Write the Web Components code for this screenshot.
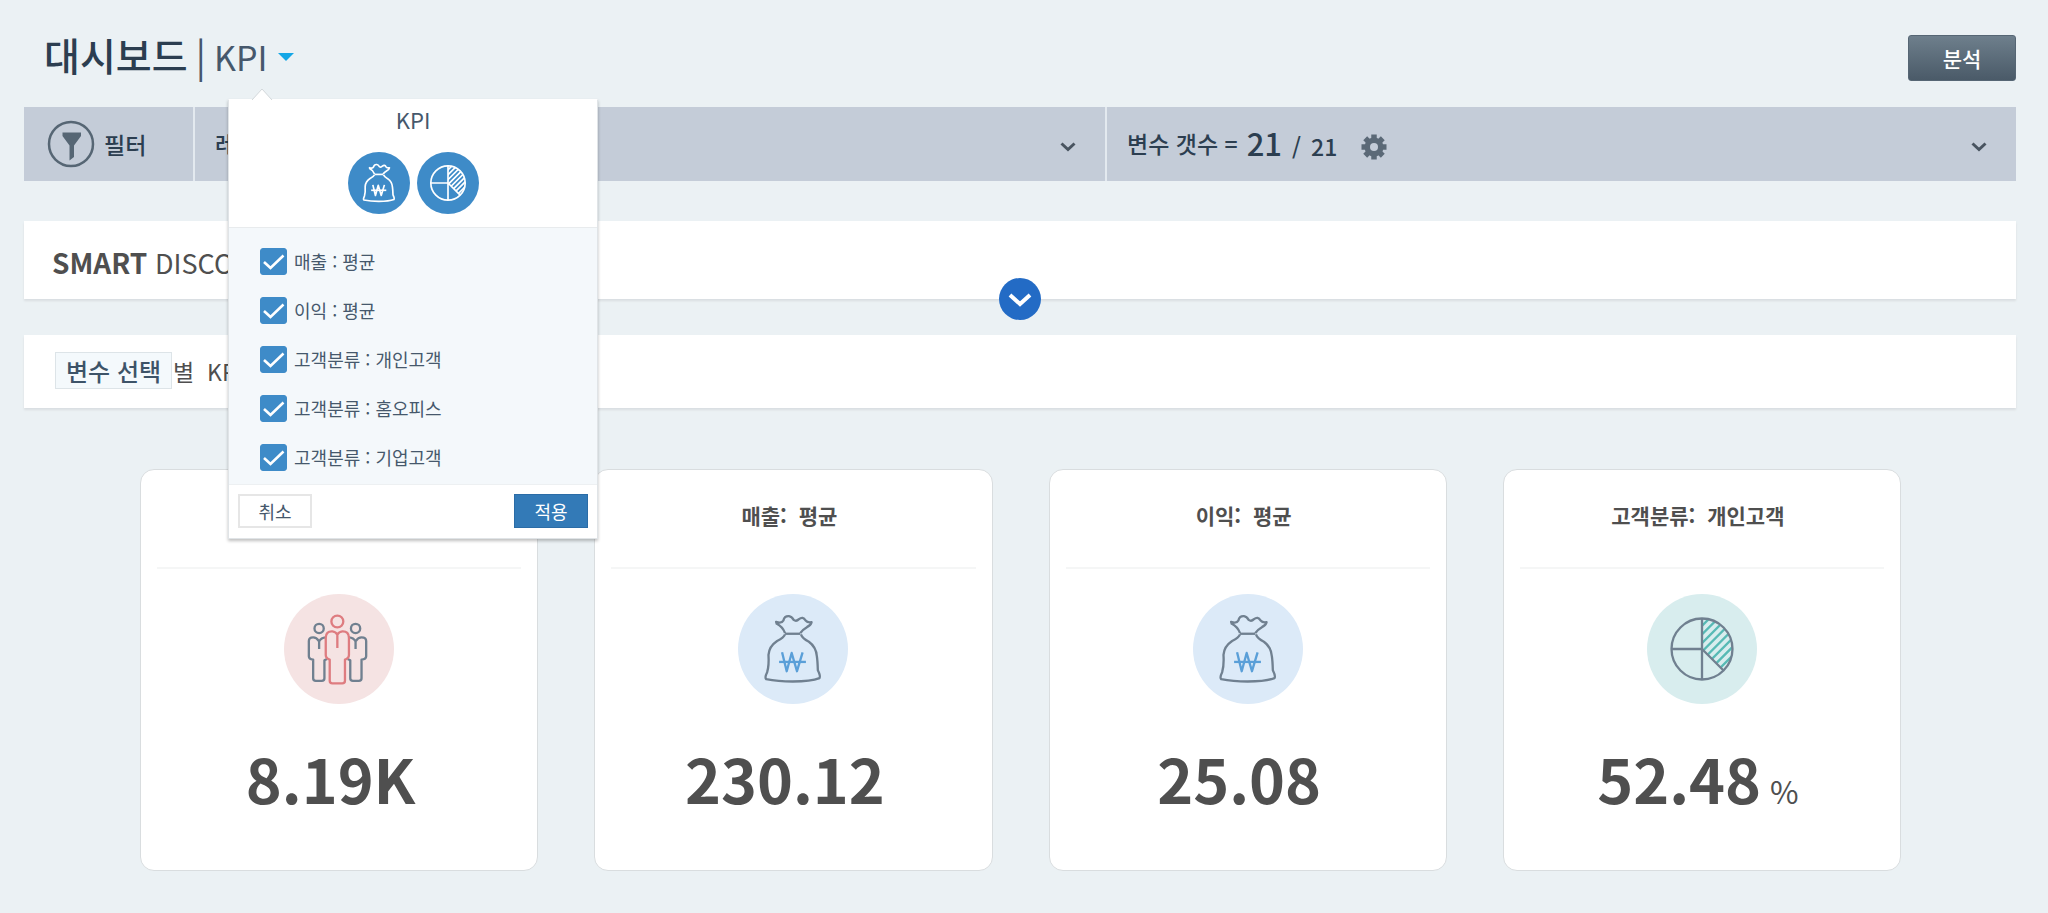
<!DOCTYPE html>
<html lang="ko">
<head>
<meta charset="utf-8">
<title>대시보드 | KPI</title>
<style>
  body {
    margin: 0;
    background: #ebf1f4;
    color: #4f4f4f;
    font-family: 'Noto Sans CJK KR', sans-serif;
  }
</style>
</head>
<body>
<dashboard-page>
  <page-title slot="title" name="대시보드" view="KPI">
    <kpi-popover heading="KPI">
      <kpi-icon slot="icons" name="bag" tone="solid"></kpi-icon>
      <kpi-icon slot="icons" name="pie" tone="solid"></kpi-icon>
      <check-item>매출 : 평균</check-item>
      <check-item>이익 : 평균</check-item>
      <check-item>고객분류 : 개인고객</check-item>
      <check-item>고객분류 : 홈오피스</check-item>
      <check-item>고객분류 : 기업고객</check-item>
    </kpi-popover>
  </page-title>
  <action-button slot="actions">분석</action-button>

  <filter-bar></filter-bar>

  <smart-panel></smart-panel>
  <variable-panel></variable-panel>

  <kpi-grid>
    <kpi-card heading="고객" value="8.19K" icon="people" tone="red"></kpi-card>
    <kpi-card heading="매출:&nbsp; 평균" value="230.12" icon="bag" tone="blue"></kpi-card>
    <kpi-card heading="이익:&nbsp; 평균" value="25.08" icon="bag" tone="blue"></kpi-card>
    <kpi-card heading="고객분류:&nbsp; 개인고객" value="52.48" unit="%" icon="pie" tone="green"></kpi-card>
  </kpi-grid>
</dashboard-page>

<script>
// small helper, every element here gets an open root with its own markup
class BaseElement extends HTMLElement {
  constructor() {
    super();
    this.attachShadow({mode: 'open'});
  }

  connectedCallback() {
    const template = document.createElement('template');
    template.innerHTML = this.render();
    this.shadowRoot.replaceChildren(template.content.cloneNode(true));
    this.ready();
  }

  attr(name) {
    return this.getAttribute(name) || '';
  }

  ready() {}
}

const chevron = `
  <svg width="16" height="10" viewBox="0 0 16 10" aria-hidden="true">
    <path d="M1.500 1.500 L8 7.500 L14.500 1.500" fill="none" stroke="currentColor" stroke-width="3"/>
  </svg>
`;

const icons = {
  people: `
    <g class="line">
      <circle cx="106" cy="104" r="14"/>
      <path d="M106 166V143 M126 131Q112 132 106 143Q98 131 88 131Q75 131 75 142V188Q75 197 88 198V254Q88 262 96 262H114Q122 262 122 254V200L130 196"/>
      <circle cx="216" cy="104" r="14"/>
      <path d="M216 166V143 M196 131Q210 132 216 143Q224 131 234 131Q248 131 248 142V188Q248 197 234 198V254Q234 262 226 262H208Q200 262 200 254V200L192 196"/>
    </g>
    <g class="accent">
      <circle cx="161" cy="83" r="18"/>
      <path d="M161 163V123 M161 123Q156 114 146 113Q126 112 126 132V184Q126 194 138 198V262Q138 270 146 270H176Q184 270 184 262V198Q196 194 196 184V132Q196 112 176 113Q166 114 161 123"/>
    </g>
  `,
  bag: `
    <g class="line">
      <path d="M142 118Q134 98 117 90L115 84Q132 90 137 80Q140 66 154 67Q162 68 168 78Q176 84 184 76Q196 66 204 80Q210 87 222 85Q220 94 208 100Q194 108 188 118"/>
      <path d="M142 120H188"/>
      <path d="M142 122Q138 132 118 142Q94 158 92 184Q94 216 88 236Q80 252 85 257Q120 264 165 264Q220 264 246 254Q250 248 241 230Q240 200 238 188Q236 160 214 144Q194 134 190 122"/>
    </g>
    <g class="accent">
      <path d="M133 176L147 233L162 178L178 233L195 176"/>
      <path d="M124 205H205"/>
    </g>
  `,
  pie: `
    <clipPath id="slice"><path d="M166 166V74A92 92 0 0 1 231 231Z"/></clipPath>
    <g class="accent" clip-path="url(#slice)">
      <path d="M160 102L202 60M160 128L228 60M160 154L254 60M160 180L270 70M160 206L270 96M160 232L270 122M160 258L270 148M160 284L270 174"/>
    </g>
    <g class="line">
      <circle cx="166" cy="166" r="92"/>
      <path d="M166 74V258M74 166H166L231 231"/>
    </g>
  `
};

class KpiIcon extends BaseElement {
  render() {
    return `
      <style>
      :host {
        display: block;
        width: 110px;
        height: 110px;
        --line: #708090;
      }
      :host([tone="solid"]) { width: 62px; height: 62px; --disc: #3e8bc8; --line: #fff; --accent: #fff; --weight: 9; }
      :host([tone="red"]) { --disc: #f5e3e3; --accent: #de7c80; }
      :host([tone="blue"]) { --disc: #dceaf8; --accent: #5a9fd8; }
      :host([tone="green"]) { --disc: #d8edee; --accent: #57bab5; }
      svg { display: block; }
      .disc { fill: var(--disc); }
      .line, .accent {
        fill: none;
        stroke: var(--line);
        stroke-width: var(--weight, 7);
        stroke-linejoin: round;
      }
      .accent { stroke: var(--accent); }
      </style>
      <svg width="100%" height="100%" viewBox="0 0 332 332" aria-hidden="true">
        <circle class="disc" cx="166" cy="166" r="166"/>
        ${icons[this.attr('name')]}
      </svg>
    `;
  }
}

class DashboardPage extends BaseElement {
  render() {
    return `
      <style>
      :host {
        display: block;
        padding: 0 32px 44px 24px;
      }
      header {
        display: flex;
        justify-content: space-between;
        align-items: flex-start;
        padding: 35px 0 26px 20px;
      }
      </style>
      <header>
        <slot name="title"></slot>
        <slot name="actions"></slot>
      </header>
      <main><slot></slot></main>
    `;
  }
}

class PageTitle extends BaseElement {
  render() {
    return `
      <style>
      :host {
        display: flex;
        align-items: baseline;
        gap: 8px;
        height: 38px;
        line-height: 38px;
        color: #46586c;
      }
      h1 {
        margin: 0;
        font-size: 39px;
        font-weight: 500;
        color: #2c3e50;
      }
      .bar { font-size: 39px; }
      .anchor { position: relative; }
      button {
        display: flex;
        align-items: center;
        gap: 10px;
        padding: 0;
        border: 0;
        background: none;
        color: inherit;
        font: inherit;
        font-size: 34px;
        cursor: pointer;
      }
      .caret {
        border: 8px solid transparent;
        border-top-color: #14a7e6;
        border-bottom: 0;
      }
      ::slotted(kpi-popover) {
        position: absolute;
        z-index: 10;
        top: 61px;
        left: 14px;
      }
      </style>
      <h1>${this.attr('name')}</h1>
      <span class="bar">|</span>
      <div class="anchor">
        <button type="button" aria-expanded="true">${this.attr('view')}<span class="caret"></span></button>
        <slot></slot>
      </div>
    `;
  }

  ready() {
    const button = this.shadowRoot.querySelector('button');
    button.addEventListener('click', () => this.toggle(button));
    this.addEventListener('close', () => this.toggle(button));
  }

  toggle(button) {
    const popover = this.querySelector('kpi-popover');
    popover.hidden = !popover.hidden;
    button.setAttribute('aria-expanded', !popover.hidden);
  }
}

class KpiPopover extends BaseElement {
  render() {
    return `
      <style>
      :host {
        display: block;
        box-sizing: border-box;
        width: 370px;
        background: #fff;
        border: 1px solid #e0e4e7;
        border-top-color: #fff;
        box-shadow: 0 2px 3px rgba(0, 0, 0, .25);
        font-size: 18px;
        line-height: 27px;
      }
      :host([hidden]) { display: none; }
      .arrow {
        position: absolute;
        top: -12px;
        left: 22px;
      }
      .head {
        display: flex;
        flex-direction: column;
        align-items: center;
        gap: 17px;
        padding: 3px 0 13px;
      }
      h2 {
        margin: 0;
        font-size: 22px;
        font-weight: 400;
        line-height: 32px;
      }
      .icons {
        display: flex;
        gap: 7px;
      }
      .list {
        display: flex;
        flex-direction: column;
        gap: 22px;
        padding: 20px 31px 13px;
        border-top: 1px solid #e8ebed;
        border-bottom: 1px solid #edf0f2;
        background: #f4f8fb;
      }
      .foot {
        display: flex;
        justify-content: space-between;
        padding: 9px 9px 10px;
      }
      button {
        box-sizing: border-box;
        width: 74px;
        height: 34px;
        padding: 0;
        border: 2px solid #e6e6e6;
        background: #fff;
        color: inherit;
        font: inherit;
        cursor: pointer;
      }
      .apply {
        border: 1px solid #2b6ca6;
        background: #337ab7;
        color: #fff;
      }
      </style>
      <svg class="arrow" width="22" height="13" viewBox="0 0 22 13" aria-hidden="true">
        <path d="M1 12L11 1L21 12V13H1Z" fill="#fff"/>
        <path d="M1 12L11 1L21 12" fill="none" stroke="#d3d8db"/>
      </svg>
      <div class="head">
        <h2>${this.attr('heading')}</h2>
        <div class="icons"><slot name="icons"></slot></div>
      </div>
      <div class="list"><slot></slot></div>
      <div class="foot">
        <button type="button" class="cancel">취소</button>
        <button type="button" class="apply">적용</button>
      </div>
    `;
  }

  ready() {
    this.shadowRoot.querySelectorAll('button').forEach(button => {
      button.addEventListener('click', () => this.dispatchEvent(new Event('close', {bubbles: true})));
    });
  }
}

class CheckItem extends BaseElement {
  render() {
    return `
      <style>
      :host { display: block; }
      label {
        display: flex;
        align-items: center;
        gap: 7px;
        cursor: pointer;
      }
      .box {
        display: grid;
        width: 27px;
        height: 27px;
      }
      input, svg { grid-area: 1 / 1; }
      input {
        appearance: none;
        width: 27px;
        height: 27px;
        margin: 0;
        border: 1px solid #3e8bc8;
        border-radius: 3px;
        background: #fff;
      }
      input:checked { background: #3e8bc8; }
      svg { pointer-events: none; z-index: 1; }
      </style>
      <label>
        <span class="box">
          <input type="checkbox" checked>
          <svg width="27" height="27" viewBox="0 0 27 27" aria-hidden="true">
            <path d="M4 14L10.500 20L23.500 7.500" fill="none" stroke="#fff" stroke-width="2.600"/>
          </svg>
        </span>
        <span><slot></slot></span>
      </label>
    `;
  }
}

class ActionButton extends BaseElement {
  render() {
    return `
      <style>
      :host { display: block; }
      button {
        box-sizing: border-box;
        display: block;
        width: 108px;
        height: 46px;
        padding: 0;
        border: 1px solid #566674;
        border-radius: 3px;
        background: linear-gradient(#6e7f8c, #4a5a68);
        color: #fff;
        font: inherit;
        font-size: 21px;
        font-weight: 500;
        cursor: pointer;
      }
      </style>
      <button type="button"><slot></slot></button>
    `;
  }
}

class FilterBar extends BaseElement {
  render() {
    return `
      <style>
      :host {
        display: grid;
        grid-template-columns: 169px 909fr 908fr;
        gap: 2px;
        background: #e3e9ef;
        color: #2c3e50;
        font-size: 23px;
        font-weight: 500;
        line-height: 34px;
      }
      .cell {
        display: flex;
        align-items: center;
        height: 74px;
        box-sizing: border-box;
        padding: 0 28px 2px 20px;
        background: #c4ccd8;
      }
      .filter {
        gap: 9px;
        padding: 0 22px 0 23px;
      }
      .count {
        display: flex;
        align-items: baseline;
        gap: 10px;
        margin-left: 9px;
        padding-top: 3px;
      }
      .big { font-size: 31px; }
      .small { font-size: 23px; }
      button {
        display: flex;
        padding: 8px 0 0;
        border: 0;
        background: none;
        color: #495460;
        cursor: pointer;
      }
      .gear { padding: 8px 24px 0; color: #5b6977; }
      .more { margin-left: auto; padding: 8px 1px 0; }
      </style>
      <div class="cell filter">
        <svg width="48" height="48" viewBox="0 0 48 48" aria-hidden="true">
          <circle cx="24" cy="24" r="22" fill="none" stroke="#566674" stroke-width="2.500"/>
          <path d="M15.500 12.500H34V16L27 25.500V37L22.500 40.500V25.500L15.500 16Z" fill="#566674"/>
        </svg>
        <span>필터</span>
      </div>
      <div class="cell">
        <span>레코드 수</span>
        <button type="button" class="more" aria-label="레코드 펼치기">${chevron}</button>
      </div>
      <div class="cell">
        <span>변수 갯수 =</span>
        <div class="count">
          <span class="big">21</span>
          <span class="small">/</span>
          <span class="small">21</span>
        </div>
        <button type="button" class="gear" aria-label="변수 설정">
          <svg width="26" height="26" viewBox="0 0 26 26" aria-hidden="true">
            <g stroke="currentColor" stroke-width="5.500">
              <path d="M13 .5V25.500M.5 13H25.500M4.200 4.200L21.800 21.800M21.800 4.200L4.200 21.800"/>
            </g>
            <circle cx="13" cy="13" r="9.500" fill="currentColor"/>
            <circle cx="13" cy="13" r="4" fill="#c4ccd8"/>
          </svg>
        </button>
        <button type="button" class="more" aria-label="변수 펼치기">${chevron}</button>
      </div>
    `;
  }
}

class SmartPanel extends BaseElement {
  render() {
    return `
      <style>
      :host {
        display: flex;
        flex-direction: column;
        position: relative;
        margin-top: 40px;
        padding: 21px 28px 16px;
        background: #fff;
        box-shadow: 0 2px 2px #d9dee1;
      }
      h2 {
        margin: 0;
        font-size: 27px;
        font-weight: 400;
        line-height: 40px;
      }
      b { font-size: 28px; }
      /* sits on the lower edge of the panel */
      button {
        display: grid;
        place-items: center;
        position: absolute;
        left: 50%;
        bottom: 0;
        width: 42px;
        height: 42px;
        padding: 2px 0 0;
        border: 0;
        border-radius: 50%;
        background: #236bc5;
        transform: translate(-50%, 50%);
        cursor: pointer;
      }
      </style>
      <h2><b>SMART</b> DISCOVERY</h2>
      <button type="button" aria-label="펼치기">
        <svg width="24" height="16" viewBox="0 0 24 16" aria-hidden="true">
          <path d="M2 3L12 12L22 3" fill="none" stroke="#fff" stroke-width="4"/>
        </svg>
      </button>
    `;
  }
}

class VariablePanel extends BaseElement {
  render() {
    return `
      <style>
      :host {
        display: flex;
        align-items: center;
        gap: 1px;
        margin-top: 36px;
        padding: 17px 31px 19px;
        background: #fff;
        box-shadow: 0 2px 2px #d9dee1;
        font-size: 23px;
        line-height: 36px;
      }
      button {
        box-sizing: border-box;
        height: 37px;
        padding: 0 10px;
        border: 1px solid #dde4e8;
        background: #f4f9fc;
        color: #3d5368;
        font: inherit;
        font-size: 24px;
        font-weight: 500;
        line-height: 35px;
        cursor: pointer;
      }
      </style>
      <button type="button">변수 선택</button>
      <span>별&nbsp; KPI</span>
    `;
  }
}

class KpiGrid extends BaseElement {
  render() {
    return `
      <style>
      :host {
        display: grid;
        grid-template-columns: repeat(4, 1fr);
        gap: 56px;
        margin-top: 61px;
        padding: 0 115px 0 116px;
      }
      </style>
      <slot></slot>
    `;
  }
}

class KpiCard extends BaseElement {
  render() {
    return `
      <style>
      :host {
        display: flex;
        flex-direction: column;
        align-items: center;
        padding: 0 16px 38px;
        background: #fff;
        border: 1px solid #d9dddf;
        border-radius: 14px;
      }
      h3 {
        align-self: stretch;
        margin: 0 0 25px;
        padding: 29px 8px 36px 0;
        border-bottom: 2px solid #f5f6f6;
        font-size: 21px;
        font-weight: 700;
        line-height: 32px;
        text-align: center;
      }
      .value {
        display: flex;
        align-items: baseline;
        margin-top: 32px;
        font-size: 61px;
        font-weight: 700;
        line-height: 83px;
      }
      .unit {
        margin: 0 8px 0 9px;
        font-size: 31px;
        font-weight: 400;
      }
      </style>
      <h3>${this.attr('heading')}</h3>
      <kpi-icon name="${this.attr('icon')}" tone="${this.attr('tone')}"></kpi-icon>
      <div class="value">${this.attr('value')}<span class="unit">${this.attr('unit')}</span></div>
    `;
  }
}

customElements.define('kpi-icon', KpiIcon);
customElements.define('dashboard-page', DashboardPage);
customElements.define('page-title', PageTitle);
customElements.define('kpi-popover', KpiPopover);
customElements.define('check-item', CheckItem);
customElements.define('action-button', ActionButton);
customElements.define('filter-bar', FilterBar);
customElements.define('smart-panel', SmartPanel);
customElements.define('variable-panel', VariablePanel);
customElements.define('kpi-grid', KpiGrid);
customElements.define('kpi-card', KpiCard);
</script>
</body>
</html>
